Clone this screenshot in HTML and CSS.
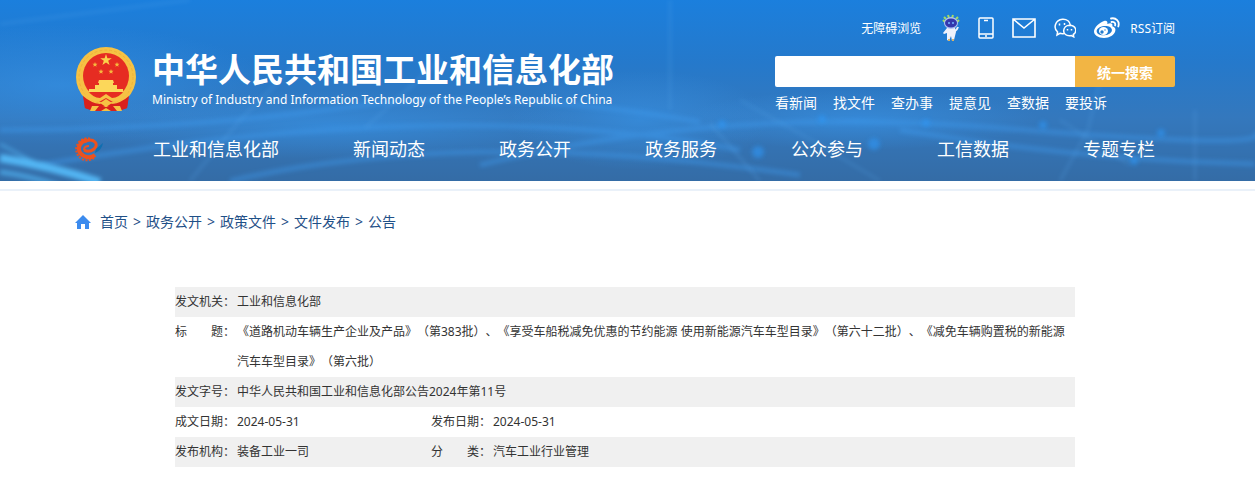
FILE: index.html
```html
<!DOCTYPE html>
<html lang="zh-CN">
<head>
    <meta charset="UTF-8">
    <meta name="viewport" content="width=device-width, initial-scale=1.0">
    <title>中华人民共和国工业和信息化部</title>
    <link rel="stylesheet" href="styles.css">
</head>
<body>

<header class="header">
    <svg class="header-bg" viewBox="0 0 1255 181" preserveAspectRatio="none" aria-hidden="true">
        <defs>
            <linearGradient id="sky" x1="0" y1="0" x2="0" y2="1">
                <stop offset="0" stop-color="#1b7fdd"/>
                <stop offset="0.35" stop-color="#2579cb"/>
                <stop offset="0.65" stop-color="#3478bd"/>
                <stop offset="1" stop-color="#346ca6"/>
            </linearGradient>
            <radialGradient id="glow">
                <stop offset="0" stop-color="#3794e8" stop-opacity="0.6"/>
                <stop offset="1" stop-color="#3794e8" stop-opacity="0"/>
            </radialGradient>
            <filter id="soft" x="-20%" y="-50%" width="140%" height="200%"><feGaussianBlur stdDeviation="2"/></filter>
        </defs>
        <rect width="1255" height="181" fill="url(#sky)"/>
        <ellipse cx="60" cy="85" rx="210" ry="60" fill="url(#glow)"/>
        <ellipse cx="330" cy="125" rx="260" ry="34" fill="url(#glow)"/>
        <ellipse cx="640" cy="120" rx="130" ry="50" fill="url(#glow)"/>
        <ellipse cx="860" cy="120" rx="180" ry="30" fill="url(#glow)"/>
        <g fill="none" stroke="#3f9cf0" stroke-width="5" opacity="0.4" filter="url(#soft)">
            <path d="M0 130Q180 130 340 108T700 122"/>
            <path d="M40 165Q240 130 420 126T740 150"/>
            <path d="M230 181Q340 155 480 152T800 175"/>
            <path d="M480 165Q720 105 1000 128T1255 132"/>
            <path d="M900 130Q1080 160 1255 164"/>
        </g>
        <g fill="none" stroke="#5aa9ee" stroke-width="2" opacity="0.3" filter="url(#soft)">
            <path d="M710 123L760 181M820 145L740 100M820 145L880 181M1060 181L1088 130L1105 60M1060 120L1130 165"/>
            <path d="M190 181L240 120L300 60M365 128L440 60M670 0V110M0 24L190 0M1195 110V181"/>
        </g>
        <g fill="none" stroke="#55bdfb" filter="url(#soft)">
            <path d="M0 158Q50 166 100 182" stroke-width="8" opacity="0.9"/>
            <path d="M0 172Q30 176 60 186" stroke-width="5" opacity="0.6"/>
            <path d="M0 144L34 162" stroke-width="3" opacity="0.5"/>
        </g>
        <g fill="#2f96f4" opacity="0.6" filter="url(#soft)">
            <circle cx="722" cy="124" r="4"/>
            <circle cx="758" cy="152" r="6"/>
            <circle cx="822" cy="119" r="4"/>
            <circle cx="874" cy="144" r="6"/>
            <circle cx="926" cy="123" r="4"/>
            <circle cx="1043" cy="125" r="4"/>
            <circle cx="1161" cy="133" r="4"/>
            <circle cx="1134" cy="161" r="4"/>
        </g>
    </svg>

    <div class="header-inner">
        <div class="header-top">
            <a class="brand" href="#">
                <svg class="emblem" viewBox="0 0 62 66" role="img" aria-label="国徽">
                    <path d="M8 46h46l-2 16-8 3H18l-8-3z" fill="#d9211d"/>
                    <circle cx="31" cy="31" r="30" fill="#f6c244"/>
                    <circle cx="31" cy="31" r="27" fill="none" stroke="#efb23a" stroke-width="1" stroke-dasharray="3 2"/>
                    <circle cx="31" cy="30" r="23" fill="#e62c22"/>
                    <path d="M31 8l1.400 4.200h4.400l-3.600 2.600 1.400 4.200-3.600-2.600-3.600 2.600 1.400-4.200-3.600-2.600h4.400z" fill="#fbd24b"/>
                    <g fill="#f7b93e">
                        <path id="star" d="M20 16l.7 1.700h1.800l-1.400 1.200.5 1.900-1.600-1.100-1.600 1.100.5-1.900-1.400-1.200h1.800z"/>
                        <use href="#star" x="22"/>
                        <use href="#star" x="6" y="7"/>
                        <use href="#star" x="16" y="7"/>
                    </g>
                    <path d="M24 34h14l1 3h-1v2h4v4h6v3H14v-3h6v-4h4v-2h-1z" fill="#fcd75a"/>
                    <path d="M12 46q19 4 38 0l-4 7q-15 7-30 0z" fill="#e62c22"/>
                    <path d="M11 43q7 9 14 9l6-4 6 4q7 0 14-9l2 4q-6 9-15 9l-7-4-7 4q-9 0-15-9z" fill="#f6c244"/>
                    <path d="M8 50q8 7 17 8l6-4 6 4q9-1 17-8l-2 12q-7 3-12 1l-9-3-9 3q-5 2-12-1z" fill="#d9211d"/>
                    <path d="M31 53l6 4-6 4-6-4zM17 60l7 0-4 5h-5zM38 60h7l2 5h-5zM26 65l5-3 5 3z" fill="#f6c244"/>
                </svg>
                <span class="brand-text">
                    <strong class="brand-name">中华人民共和国工业和信息化部</strong>
                    <span class="brand-en" lang="en">Ministry of Industry and Information Technology of the People’s Republic of China</span>
                </span>
            </a>

            <div class="tools">
                <div class="quick">
                    <a class="quick-access" href="#">无障碍浏览</a>
                    <a href="#" aria-label="智能机器人">
                        <svg width="18" height="28" viewBox="0 0 18 28">
                            <path d="M3 8L1 6M4 5L2 3M7 4L6 1M10 4l1-3M14 5l2-2M15 8l2-2" stroke="#a5dc62" stroke-width="2"/>
                            <path d="M5 14h8l1 4-2 8-2 1-1-5-2 5-2-1 0-7-3 1-1-1z" fill="#eef1fb"/>
                            <path d="M13 17q2-1 3-4" stroke="#eef1fb" stroke-width="2" fill="none"/>
                            <ellipse cx="9" cy="9" rx="7" ry="6" fill="#b4c4f2"/>
                            <ellipse cx="9" cy="9" rx="6" ry="4.500" fill="#3438ad"/>
                            <path d="M6 9h2M10 9h2" stroke="#75b8ff" stroke-width="1.500"/>
                            <path d="M6 26h2M10 26h2" stroke="#d9b466" stroke-width="2"/>
                        </svg>
                    </a>
                    <a href="#" aria-label="手机版">
                        <svg width="16" height="22" viewBox="0 0 16 22" fill="none" stroke="#fff" stroke-width="1.500">
                            <rect x="1" y="1" width="14" height="20" rx="1"/>
                            <path d="M1 17h14M6 3.500h4M7 19h2"/>
                        </svg>
                    </a>
                    <a href="#" aria-label="邮箱">
                        <svg width="24" height="20" viewBox="0 0 24 20" fill="none" stroke="#fff" stroke-width="1.600">
                            <path d="M1 1h22v18H1zM1 1l11 9L23 1"/>
                        </svg>
                    </a>
                    <a href="#" aria-label="微信">
                        <svg width="22" height="20" viewBox="0 0 22 20" fill="none" stroke="#fff" stroke-width="1.500">
                            <path d="M10 15.500q-2 .5-4-.2L3 17l.6-3C-1 10 1 2 8.500 1.200 13 .9 16 3.800 16.300 7"/>
                            <path d="M15.500 7.200c7.500.4 7.500 7 3.800 9.300l.4 2.300-2.400-1.300C12 18.500 9.500 15.500 9.700 12.500c.2-3 2.600-5.200 5.800-5.300z"/>
                            <path d="M5.500 5.500v2M10.500 5v2M13.500 11v1.500M17.500 11v1.500"/>
                        </svg>
                    </a>
                    <a href="#" aria-label="微博">
                        <svg width="26" height="22" viewBox="0 0 26 22" fill="none">
                            <path fill="#fff" fill-rule="evenodd" d="M10 4c2.500-1 4 .3 3.300 3 3-1.300 6-1 5 2.300 2.500.8 3.600 2.300 3 4.700-1 4-5.700 7-11.300 7C4 21 0 18 0 14.500 0 10.500 5.500 5.500 10 4zM10 9c-4.500.4-7.500 2.800-7.300 5.500.2 2.600 3.500 4.200 7.800 3.800 4.500-.4 7.700-2.900 7.400-5.600C17.600 10 14.300 8.600 10 9z"/>
                            <ellipse cx="9.500" cy="14" rx="4.500" ry="4" fill="#fff"/>
                            <circle cx="8" cy="15" r="1.700" fill="#237ccf"/>
                            <circle cx="11" cy="13" r=".7" fill="#237ccf"/>
                            <path d="M17 1.500c5-1.200 9 3 7.300 8M17.500 5c2.500-.6 4.300 1.300 3.600 3.500" stroke="#fff" stroke-width="1.800" stroke-linecap="round"/>
                        </svg>
                    </a>
                    <a class="rss" href="#">RSS订阅</a>
                </div>

                <form class="search" role="search">
                    <input class="search-input" type="text" aria-label="搜索">
                    <button class="search-btn" type="button">统一搜索</button>
                </form>

                <div class="shortcuts">
                    <a href="#">看新闻</a>
                    <a href="#">找文件</a>
                    <a href="#">查办事</a>
                    <a href="#">提意见</a>
                    <a href="#">查数据</a>
                    <a href="#">要投诉</a>
                </div>
            </div>
        </div>

        <nav class="nav">
            <a class="nav-logo" href="#" aria-label="首页">
                <svg width="28" height="26" viewBox="0 0 28 26" fill="none">
                    <path d="M19 22A11 11 0 1 1 16 3" stroke="#e9511f" stroke-width="2" stroke-dasharray="2 1.500"/>
                    <path d="M20 19Q15 23 9 20T4 11Q6 5 12 4" stroke="#ee521d" stroke-width="4"/>
                    <path d="M9 14Q14 17 19 13Q23 9 20 6Q16 2 9 6" stroke="#ee521d" stroke-width="3"/>
                    <path d="M9 14Q9 10 14 10" stroke="#ee521d" stroke-width="2"/>
                    <path d="M20 17Q27 14 28 7L21 13z" fill="#0f6fb0"/>
                </svg>
            </a>
            <a href="#">工业和信息化部</a>
            <a href="#">新闻动态</a>
            <a href="#">政务公开</a>
            <a href="#">政务服务</a>
            <a href="#">公众参与</a>
            <a href="#">工信数据</a>
            <a href="#">专题专栏</a>
        </nav>
    </div>
</header>

<div class="divider"></div>

<main class="main">
    <nav class="crumbs" aria-label="当前位置">
        <svg width="16" height="14" viewBox="0 0 16 14" fill="#3c8bee"><path d="M8 0l8 8h-2v6h-4V9H6v5H2V8H0z"/></svg>
        <a href="#">首页</a>
        <span>&gt;</span>
        <a href="#">政务公开</a>
        <span>&gt;</span>
        <a href="#">政策文件</a>
        <span>&gt;</span>
        <a href="#">文件发布</a>
        <span>&gt;</span>
        <a href="#">公告</a>
    </nav>

    <table class="info">
        <colgroup>
            <col class="col-label">
            <col class="col-date">
            <col class="col-label">
            <col>
        </colgroup>
        <tbody>
            <tr>
                <th scope="row">发文机关：</th>
                <td colspan="3">工业和信息化部</td>
            </tr>
            <tr>
                <th scope="row">标　　题：</th>
                <td colspan="3">《道路机动车辆生产企业及产品》（第383批）、《享受车船税减免优惠的节约能源 使用新能源汽车车型目录》（第六十二批）、《减免车辆购置税的新能源汽车车型目录》（第六批）</td>
            </tr>
            <tr>
                <th scope="row">发文字号：</th>
                <td colspan="3">中华人民共和国工业和信息化部公告2024年第11号</td>
            </tr>
            <tr>
                <th scope="row">成文日期：</th>
                <td>2024-05-31</td>
                <th scope="row">发布日期：</th>
                <td>2024-05-31</td>
            </tr>
            <tr>
                <th scope="row">发布机构：</th>
                <td>装备工业一司</td>
                <th scope="row">分　　类：</th>
                <td>汽车工业行业管理</td>
            </tr>
        </tbody>
    </table>
</main>

</body>
</html>
```
FILE: styles.css
```css
body {
    margin: 0;
    font-family: "Noto Sans", "Noto Sans CJK SC", sans-serif;
    font-size: 12px;
    color: #333;
    background: #fff;
    text-spacing-trim: space-all;
}
a {
    color: inherit;
    text-decoration: none;
}
svg {
    display: block;
}

/* Header: the artwork and the content share one grid cell */
.header {
    display: grid;
    color: #fff;
    background: #2a78c4;
}
.header-bg,
.header-inner {
    grid-area: 1 / 1;
}
.header-bg {
    width: 100%;
    height: 100%;
    min-height: 0;
    contain: size;
}
.header-inner {
    z-index: 1;
    padding: 14px 80px 19px 75px;
}
.header-top {
    display: flex;
    justify-content: space-between;
}

.brand {
    display: flex;
    align-items: flex-start;
    gap: 15px;
    padding-top: 32px;
}
.emblem {
    width: 62px;
    height: 66px;
}
.brand-text {
    display: flex;
    flex-direction: column;
    gap: 4px;
    padding-top: 3px;
    white-space: nowrap;
}
.brand-name {
    font-family: "Noto Sans CJK SC", sans-serif;
    font-size: 33px;
    line-height: 38px;
}
.brand-en {
    font-size: 12px;
    line-height: 18px;
}

.tools {
    width: 400px;
}
.quick {
    display: flex;
    align-items: center;
    justify-content: flex-end;
    height: 28px;
    gap: 18px;
}
.quick .quick-access {
    margin-right: 3px;
}
.quick .rss {
    margin-left: -8px;
}
.search {
    display: flex;
    height: 31px;
    margin-top: 14px;
}
.search-input {
    flex: 1;
    min-width: 0;
    padding: 0 10px;
    border: 0;
    border-radius: 2px 0 0 2px;
    background: #fff;
}
.search-btn {
    width: 100px;
    border: 0;
    border-radius: 0 2px 2px 0;
    background: #f2b544;
    color: #fff;
    font: bold 14px "Noto Sans CJK SC", sans-serif;
}
.shortcuts {
    display: flex;
    gap: 16px;
    padding-top: 6px;
    font-size: 14px;
    line-height: 20px;
}

.nav {
    display: flex;
    justify-content: space-between;
    align-items: center;
    padding-right: 20px;
    margin-top: 23px;
    font-size: 18px;
    line-height: 26px;
}
.nav-logo {
    width: 4px;
}

.divider {
    height: 2px;
    margin-top: 8px;
    background: #eaf1f9;
}

/* Breadcrumb and document details */
.main {
    padding: 21px 80px 18px 75px;
}
.crumbs {
    display: flex;
    align-items: center;
    gap: 5px;
    font-size: 14px;
    line-height: 20px;
    color: #1f5087;
}
.crumbs svg {
    margin-right: 4px;
}

.info {
    width: calc(100% - 200px);
    margin: 55px 100px 0;
    border-collapse: collapse;
    table-layout: fixed;
    line-height: 30px;
}
.info th,
.info td {
    padding: 0;
    font-weight: normal;
    text-align: left;
    vertical-align: top;
}
.info tr:nth-child(odd) {
    background: #f0f0f0;
}
.col-label {
    width: 62px;
}
.col-date {
    width: 194px;
}
```
